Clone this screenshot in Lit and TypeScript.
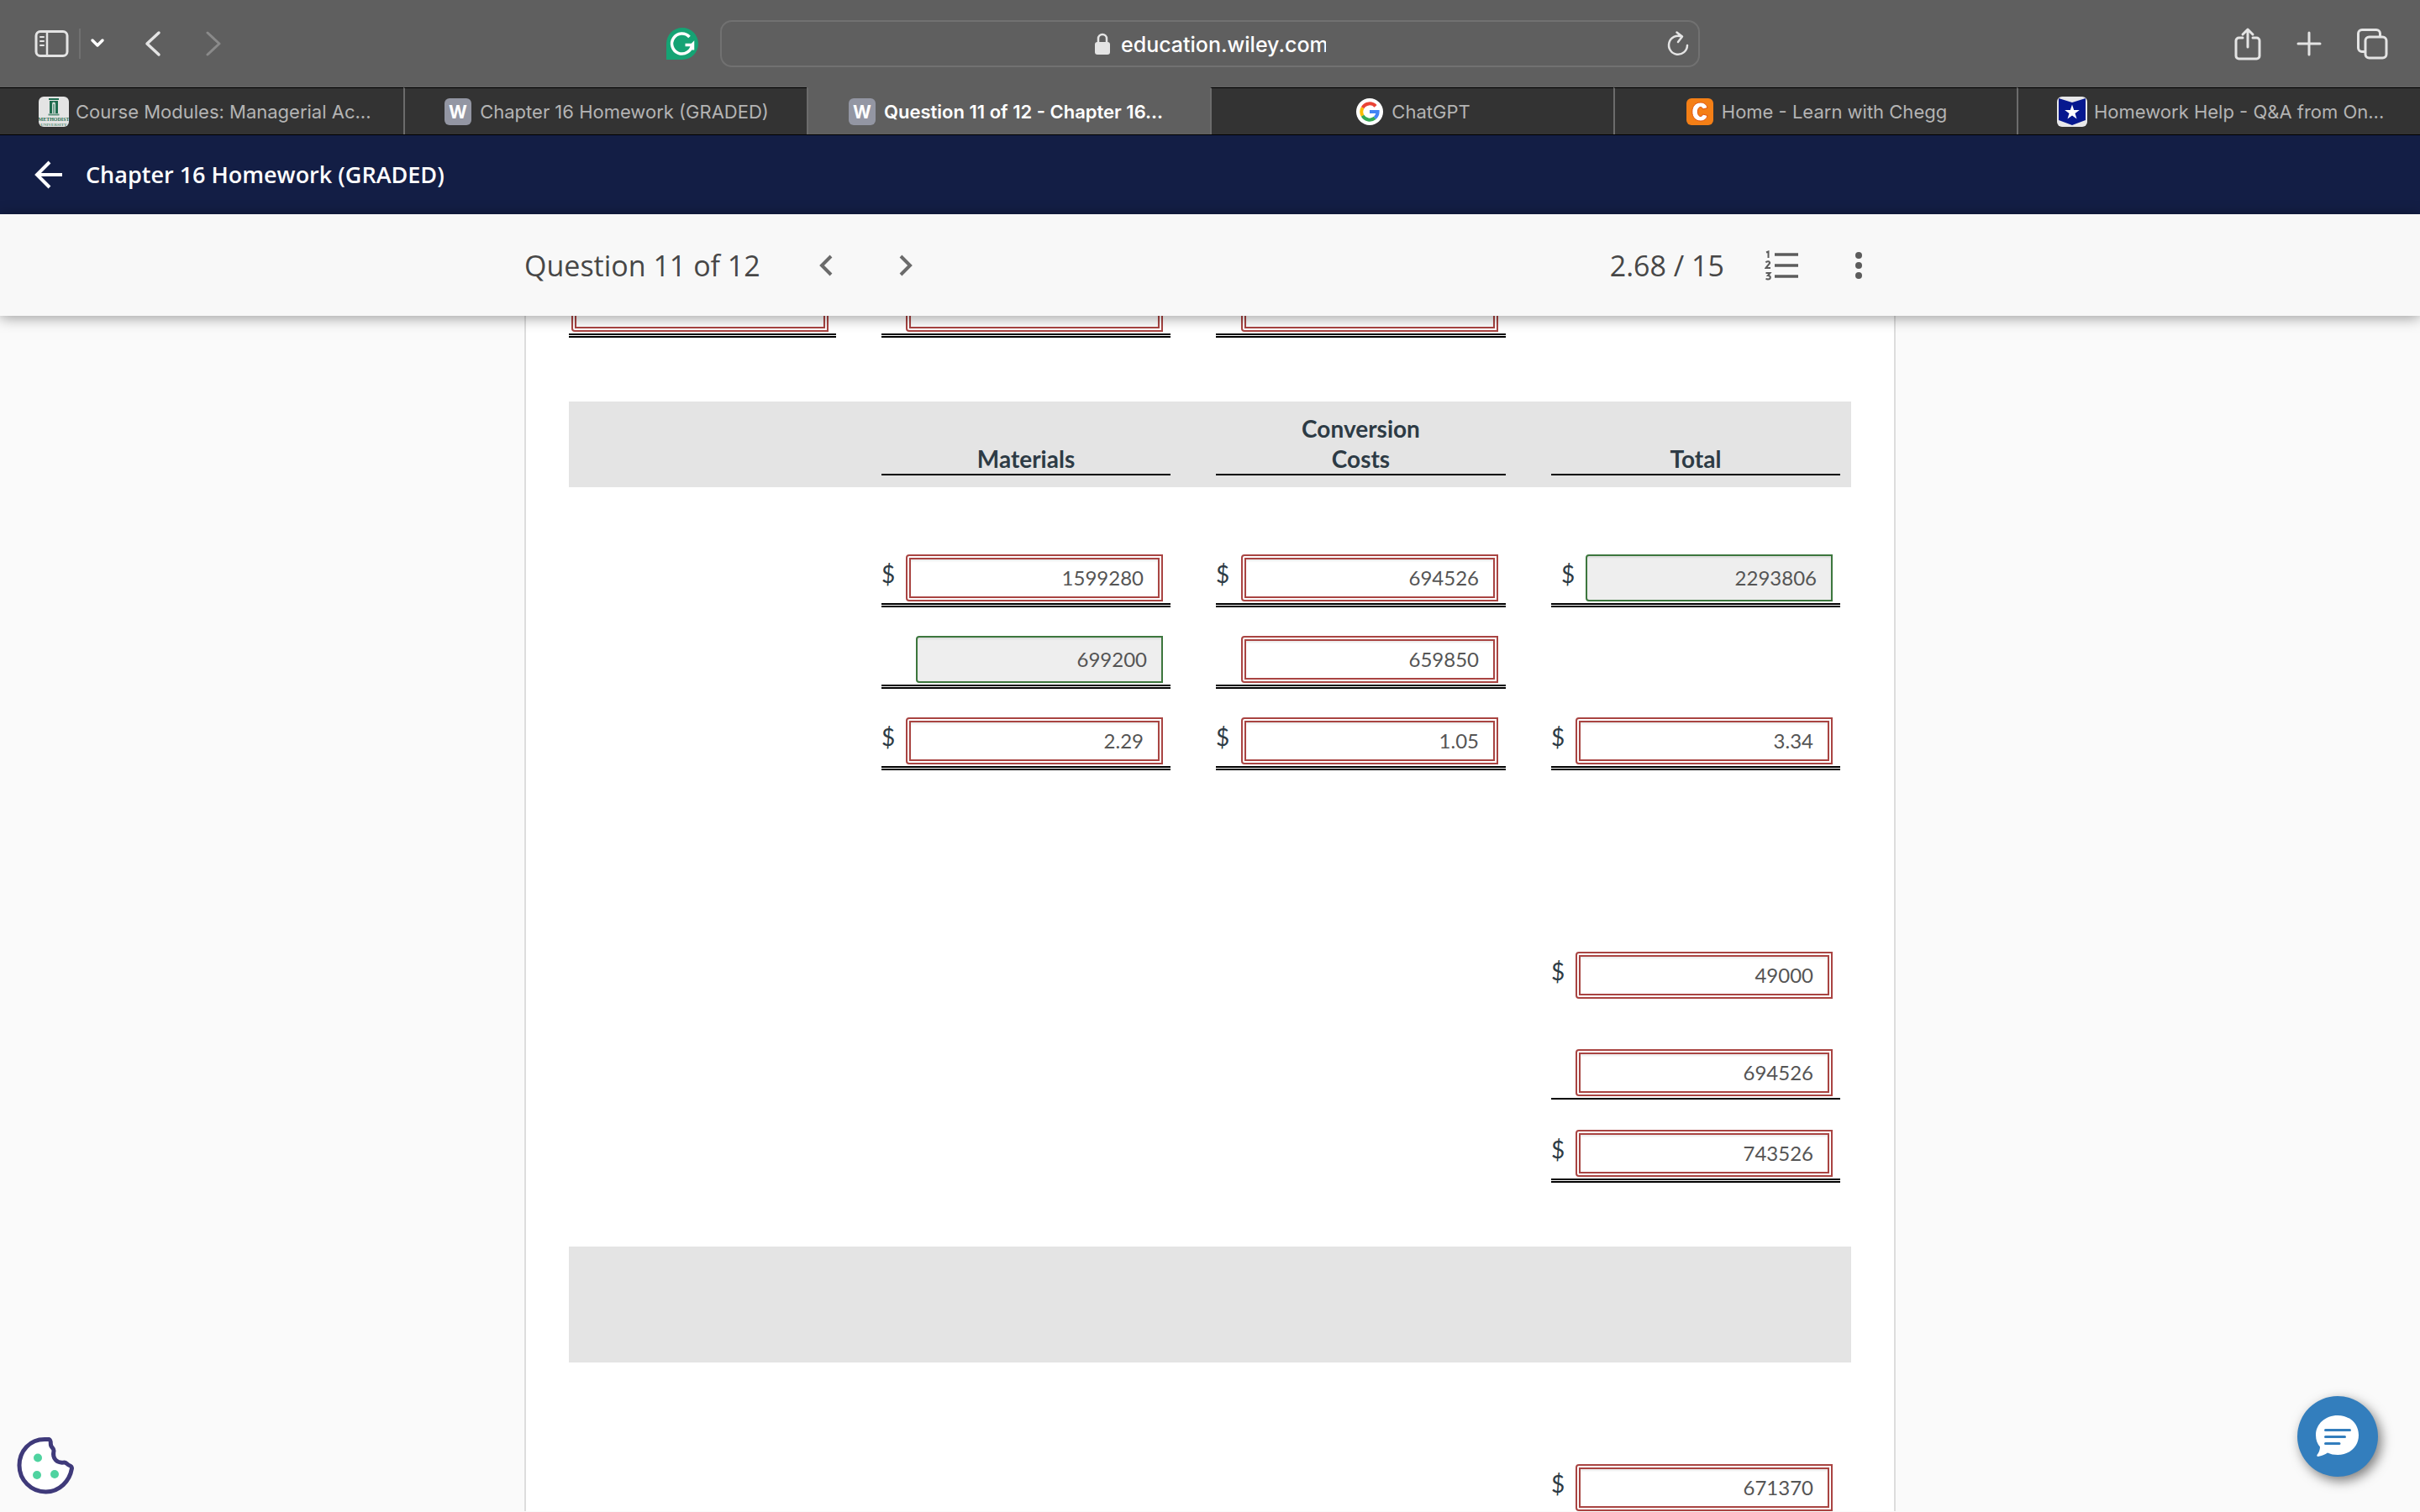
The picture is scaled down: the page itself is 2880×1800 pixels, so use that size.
import { LitElement, html, svg, css, nothing } from "lit";
import { customElement, property } from "lit/decorators.js";
import { classMap } from "lit/directives/class-map.js";

type Rule = "none" | "single" | "double";

interface Answer {
  label: string;
  value: string;
  dollar?: boolean;
  correct?: boolean;
  rule: Rule;
}

interface Tab {
  icon: string;
  title: string;
  truncated?: boolean;
  active?: boolean;
}

const TABS: Tab[] = [
  { icon: "methodist", title: "Course Modules: Managerial Ac...", truncated: true },
  { icon: "w", title: "Chapter 16 Homework (GRADED)" },
  { icon: "w", title: "Question 11 of 12 - Chapter 16...", truncated: true, active: true },
  { icon: "google", title: "ChatGPT" },
  { icon: "chegg", title: "Home - Learn with Chegg" },
  { icon: "star", title: "Homework Help - Q&A from On...", truncated: true },
];

@customElement("tab-icon")
class TabIcon extends LitElement {
  @property() name = "w";

  static styles = css`
    :host { display: block; width: 36px; height: 36px; flex: none; }
    svg { display: block; width: 36px; height: 36px; }
    text { font-family: Inter, sans-serif; font-weight: 700; text-anchor: middle; }
    .serif { font-family: "Liberation Serif", serif; }
  `;

  private shape() {
    switch (this.name) {
      case "methodist":
        return svg`
          <rect width="36" height="36" rx="6" fill="#e4e4e4" />
          <path d="M12 2h12v2H12zM13 5h10v15H13z" fill="#1f6b4e" />
          <path d="M16 20V8.500a2 2 0 0 1 4 0V20z" fill="#cfdcd6" />
          <path d="M17.500 20V9h1v11z" fill="#1f6b4e" />
          <path d="M11.500 20.500h13v2h-13z" fill="#5c917c" />
          <text class="serif" x="18" y="29" font-size="6" fill="#1f6b4e">METHODIST</text>
          <text class="serif" x="18" y="34.500" font-size="5" fill="#5c917c">UNIVERSITY</text>`;
      case "google":
        return svg`
          <circle cx="18" cy="18" r="16" fill="#fff" />
          <g fill="none" stroke-width="4">
            <path d="M25.100 11.400A9.700 9.700 0 0 0 9.600 13.200" stroke="#ea4335" />
            <path d="M9.600 13.200a9.700 9.700 0 0 0 0 9.600" stroke="#fbbc05" />
            <path d="M9.600 22.800a9.700 9.700 0 0 0 14.600 2.600" stroke="#34a853" />
            <path d="M24.200 25.400A9.700 9.700 0 0 0 27.600 18H18" stroke="#4285f4" />
          </g>`;
      case "chegg":
        return svg`
          <rect x="2" y="2" width="32" height="32" rx="6" fill="#f47f16" />
          <path d="M27 13.500C26 9 22.800 7 18.800 7c-6 0-10 4.400-10 11s4 11 10 11c4 0 7.200-2 8.200-6.500l-5.500-1.500c-.500 1.700-1.200 2.500-2.500 2.500-2.300 0-3.600-2-3.600-5.500s1.300-5.500 3.600-5.500c1.300 0 2 .800 2.500 2.500z" fill="#fff" stroke="#e2530c" stroke-width="1" />`;
      case "star":
        return svg`
          <rect width="36" height="36" rx="6" fill="#e8e8ea" />
          <path d="M2 2l16 5 16-5v26l-16 6-16-6z" fill="#06188f" />
          <path d="M18 9.500l2.200 6.400h6.600l-5.300 4 2 6.600-5.500-4-5.500 4 2-6.600-5.300-4h6.600z" fill="#fff" />`;
      default:
        return svg`
          <rect x="2" y="2" width="32" height="32" rx="6" fill="#9396a3" />
          <text x="18" y="26" font-size="21" fill="#fff">W</text>`;
    }
  }

  render() {
    return html`<svg viewBox="0 0 36 36" aria-hidden="true">${this.shape()}</svg>`;
  }
}

@customElement("browser-chrome")
class BrowserChrome extends LitElement {
  static styles = css`
    :host { display: block; background: #5f5f5f; color: #fff; font-family: Inter, "Liberation Sans", sans-serif; }
    button { display: flex; background: none; border: 0; padding: 0; margin: 0; color: inherit; }
    svg { display: block; fill: none; stroke: #e4e4e4; stroke-linecap: round; stroke-linejoin: round; }
    .toolbar { display: grid; grid-template-columns: 1fr minmax(0, 1166px) 1fr; align-items: center; height: 104px; }
    .left { display: flex; align-items: center; padding: 0 26px 0 40px; }
    .divider { width: 2px; height: 36px; margin-left: 12px; background: #717171; }
    .menu { margin-left: 10px; }
    .back { margin-left: 44px; }
    .forward { margin-left: 48px; }
    .grammarly { margin-left: auto; }
    .address { box-sizing: border-box; display: grid; grid-template-columns: 1fr auto 1fr; align-items: center; height: 56px; border: 2px solid #717171; border-radius: 14px; }
    .site { grid-column: 2; display: flex; align-items: center; gap: 12px; }
    .url { width: 244px; padding: 2px 0 0; border: 0; background: none; color: #fff; font: 500 25px/32px Inter, "Liberation Sans", sans-serif; outline: none; }
    .reload { justify-self: end; margin-right: 10px; }
    .right { display: flex; align-items: center; justify-content: flex-end; gap: 40px; padding-right: 38px; }
    .tabs { display: grid; grid-template-columns: repeat(6, 1fr); height: 57px; border-bottom: 1px solid #000; box-sizing: border-box; }
    .tab { display: flex; align-items: center; justify-content: center; gap: 8px; min-width: 0; padding: 0 46px; box-sizing: border-box; background: #333; border-top: 1px solid #000; color: #b4b4b4; text-decoration: none; font-size: 22px; line-height: 32px; white-space: nowrap; }
    .tab + .tab { border-left: 2px solid #6c6c6c; }
    .tab.active { background: #5f5f5f; border-top-color: #5f5f5f; color: #fff; font-weight: 600; }
    .truncated .title { flex: 1; min-width: 0; }
  `;

  render() {
    return html`
      <div class="toolbar">
        <div class="left">
          <button aria-label="Show sidebar">
            <svg width="42" height="34" viewBox="0 0 42 34" stroke-width="3">
              <rect x="3" y="2.500" width="37" height="29" rx="5" />
              <path d="M16 3v28" stroke-width="2.500" />
              <path d="M8 9h4M8 14h4M8 19h4" stroke-width="2" />
            </svg>
          </button>
          <span class="divider"></span>
          <button class="menu" aria-label="Tab groups">
            <svg width="20" height="14" viewBox="0 0 20 14" stroke-width="3.500" style="stroke: #fff"><path d="M4 3l6 6 6-6" /></svg>
          </button>
          <button class="back" aria-label="Back">
            <svg width="24" height="34" viewBox="0 0 24 34" stroke-width="3.500"><path d="M19 4L5 17l14 13" /></svg>
          </button>
          <button class="forward" aria-label="Forward" disabled>
            <svg width="24" height="34" viewBox="0 0 24 34" stroke-width="3" style="stroke: #8a8a8a"><path d="M5 4l14 13L5 30" /></svg>
          </button>
          <button class="grammarly" aria-label="Grammarly">
            <svg width="38" height="38" viewBox="0 0 38 38">
              <path d="M0 19a19 19 0 1 1 19 19H0z" fill="#15a374" stroke="none" />
              <path d="M27.500 11a12 12 0 1 0 3 9.500H22.500M30.500 20.500l1-1v7" stroke="#fff" stroke-width="3.500" stroke-linecap="butt" stroke-linejoin="miter" />
            </svg>
          </button>
        </div>
        <div class="address">
          <div class="site">
            <label for="url" aria-label="Address">
              <svg width="20" height="28" viewBox="0 0 20 28">
                <path d="M5 13V8a5 5 0 0 1 10 0v5" stroke-width="2.500" />
                <rect x="1" y="12" width="18" height="15" rx="3" fill="#e4e4e4" stroke="none" />
              </svg>
            </label>
            <input class="url" id="url" type="text" value="education.wiley.com" />
          </div>
          <button class="reload" aria-label="Reload">
            <svg width="28" height="32" viewBox="0 0 28 32" stroke-width="2.500"><path d="M18 7.500a11 11 0 1 0 7 10.500M12.500 2.500l6.500 5-5 6.500" /></svg>
          </button>
        </div>
        <div class="right">
          <button aria-label="Share">
            <svg width="34" height="40" viewBox="0 0 34 40" stroke-width="3"><path d="M11 13H6.500A3.500 3.500 0 0 0 3 16.500v18A3.500 3.500 0 0 0 6.500 38h21a3.500 3.500 0 0 0 3.500-3.500v-18a3.500 3.500 0 0 0-3.500-3.500H23M17 24V3M11 9l6-6 6 6" /></svg>
          </button>
          <button aria-label="New tab">
            <svg width="32" height="32" viewBox="0 0 32 32" stroke-width="3"><path d="M16 3v26M3 16h26" /></svg>
          </button>
          <button aria-label="Tab overview">
            <svg width="38" height="38" viewBox="0 0 38 38" stroke-width="3">
              <rect x="11" y="11" width="25" height="25" rx="4.500" />
              <path d="M10.500 28.500H7A4.500 4.500 0 0 1 2.500 24V7A4.500 4.500 0 0 1 7 2.500h17A4.500 4.500 0 0 1 28.500 7v3.500" />
            </svg>
          </button>
        </div>
      </div>
      <nav class="tabs" aria-label="Tabs">
        ${TABS.map(
          (t) => html`<a href="#" class=${classMap({ tab: true, active: !!t.active, truncated: !!t.truncated })}>
            <tab-icon name=${t.icon}></tab-icon><span class="title">${t.title}</span>
          </a>`,
        )}
      </nav>
    `;
  }
}

@customElement("answer-field")
class AnswerField extends LitElement {
  @property({ attribute: false }) answer!: Answer;

  static styles = css`
    :host { display: block; }
    .field { display: flex; padding: 0 9px 2px 0; color: #2d3b45; }
    .single { border-bottom: 2px solid #000; }
    .double { border-bottom: 5px double #000; }
    .none { padding-bottom: 0; }
    .sign { flex: 1; font-size: 28px; line-height: 46px; }
    .correct .sign { padding-left: 12px; }
    input { box-sizing: border-box; width: 306px; height: 56px; padding: 0 17px 2px; margin: 0; border: 6px double #a94442; border-radius: 4px 0 0 4px; background: #fff; box-shadow: inset 0 2px 2px rgba(0, 0, 0, 0.08); color: #555; font: 24px/34px Lato, sans-serif; text-align: right; outline: none; }
    .correct input { width: 294px; border: 2px solid #3c763d; background: #eee; }
  `;

  render() {
    const a = this.answer;
    return html`<div class=${classMap({ field: true, [a.rule]: true, correct: !!a.correct })}>
      <label class="sign" for="value">${a.dollar ? "$" : nothing}</label>
      <input id="value" type="text" aria-label=${a.label} .value=${a.value} ?readonly=${a.correct} />
    </div>`;
  }
}

const field = (label: string, value: string, rule: Rule, dollar = true, correct = false): Answer => ({
  label,
  value,
  rule,
  dollar,
  correct,
});

interface Row {
  kind: string;
  cells: (Answer | null)[];
}

const BEFORE: Row[] = [
  {
    kind: "first",
    cells: [field("Units", "", "double", false), field("Materials units", "", "double", false), field("Conversion units", "", "double", false), null],
  },
];

const AFTER: Row[] = [
  { kind: "costs", cells: [null, field("Materials total", "1599280", "double"), field("Conversion total", "694526", "double"), field("Total costs", "2293806", "double", true, true)] },
  { kind: "units", cells: [null, field("Materials equivalent units", "699200", "double", false, true), field("Conversion equivalent units", "659850", "double", false), null] },
  { kind: "units", cells: [null, field("Materials unit cost", "2.29", "double"), field("Conversion unit cost", "1.05", "double"), field("Total unit cost", "3.34", "double")] },
  { kind: "opening", cells: [null, null, null, field("Costs in beginning inventory", "49000", "none")] },
  { kind: "started", cells: [null, null, null, field("Costs started into production", "694526", "single", false)] },
  { kind: "sum", cells: [null, null, null, field("Total costs to account for", "743526", "double")] },
];

@customElement("app-root")
class AppRoot extends LitElement {
  static styles = css`
    :host { display: flex; flex-direction: column; height: 100vh; overflow: hidden; position: relative; background: #fafafa; color: #2d3b45; font-family: Lato, sans-serif; }
    button { display: flex; background: none; border: 0; padding: 0; margin: 0; }
    svg { display: block; }
    .course { display: flex; align-items: center; gap: 24px; flex: none; height: 94px; padding: 0 36px; background: #131e45; color: #fff; font: 600 27px/40px "Open Sans", sans-serif; }
    .course h1 { margin: 0; font: inherit; }
    .bar { flex: none; position: relative; z-index: 1; height: 121px; background: #f8f8f8; box-shadow: 0 2px 16px rgba(0, 0, 0, 0.4); }
    .inner { display: flex; align-items: center; max-width: 1632px; height: 100%; margin: 0 auto; color: #474747; font: 34px/48px "Open Sans", sans-serif; }
    .inner h2 { margin: 0; font: inherit; }
    .prev { margin-left: 64px; }
    .next { margin-left: 67px; }
    .score { margin-left: auto; }
    .list { margin-left: 48px; }
    .more { margin: 0 34px 0 60px; }
    main { flex: 1; min-height: 0; overflow: hidden; }
    .card { box-sizing: border-box; max-width: 1632px; min-height: 100%; margin: 0 auto; padding: 0 51px; border: solid #ddd; border-width: 0 2px; background: #fff; }
    table { width: 100%; margin-top: -37px; border-collapse: collapse; table-layout: fixed; }
    .c1 { width: 372px; }
    .c2 { width: 398px; }
    .c3 { width: 399px; }
    td, th { padding: 0 54px 0 0; vertical-align: bottom; }
    td:last-child, th:last-child { padding-right: 13px; }
    .gap { height: 76px; }
    .head { height: 102px; background: #e4e4e4; }
    .head th { padding-bottom: 14px; font-size: 28px; line-height: 36px; font-weight: 700; }
    .caption { border-bottom: 2px solid #000; }
    .first { height: 63px; }
    .costs { height: 143px; }
    .units { height: 97px; }
    .opening { height: 272px; }
    .started { height: 120px; }
    .sum { height: 99px; }
    .band { height: 138px; background: #e4e4e4; }
    .last { height: 177px; }
    .cookie { position: absolute; left: 20px; bottom: 20px; }
    .chat { position: absolute; right: 50px; bottom: 42px; width: 96px; height: 96px; border-radius: 50%; background: #337ebd; align-items: center; justify-content: center; box-shadow: 4px 5px 14px rgba(0, 0, 0, 0.5); }
  `;

  private row(r: Row) {
    return html`<tr class=${r.kind}>
      ${r.cells.map((c) => html`<td>${c ? html`<answer-field .answer=${c}></answer-field>` : nothing}</td>`)}
    </tr>`;
  }

  render() {
    return html`
      <browser-chrome></browser-chrome>
      <header class="course">
        <button aria-label="Back to course">
          <svg width="42" height="40" viewBox="0 0 42 40" fill="none" stroke="#fff" stroke-width="4"><path d="M38 20H9M23 5L8 20l15 15" /></svg>
        </button>
        <h1>Chapter 16 Homework (GRADED)</h1>
      </header>
      <section class="bar">
        <div class="inner">
          <h2>Question 11 of 12</h2>
          <button class="prev" aria-label="Previous question">
            <svg width="28" height="32" viewBox="0 0 28 32" fill="none" stroke="#6b6b6b" stroke-width="4"><path d="M20 5L9 16l11 11" /></svg>
          </button>
          <button class="next" aria-label="Next question">
            <svg width="28" height="32" viewBox="0 0 28 32" fill="none" stroke="#6b6b6b" stroke-width="4"><path d="M8 5l11 11L8 27" /></svg>
          </button>
          <span class="score">2.68 / 15</span>
          <button class="list" aria-label="Question list">
            <svg width="42" height="36" viewBox="0 0 42 36" fill="none" stroke="#5c5c5c">
              <path d="M12 5h28M12 18h28M12 31h28" stroke-width="3.500" />
              <path d="M2 2.500l2.500-1V9M1.500 14.500c1-2 5.500-1.500 4.500 1L1.500 21H7M1.500 27h5L4 30c4 0 3.500 4.500 0 4.500L1.500 34" stroke-width="2" />
            </svg>
          </button>
          <button class="more" aria-label="More options">
            <svg width="20" height="36" viewBox="0 0 20 36" fill="#5c5c5c"><circle cx="10" cy="6" r="4" /><circle cx="10" cy="18" r="4" /><circle cx="10" cy="30" r="4" /></svg>
          </button>
        </div>
      </section>
      <main>
        <div class="card">
          <table>
            <colgroup><col class="c1" /><col class="c2" /><col class="c3" /><col /></colgroup>
            <tbody>
              ${BEFORE.map((r) => this.row(r))}
              <tr class="gap"><td colspan="4"></td></tr>
              <tr class="head">
                <td></td>
                <th scope="col"><div class="caption">Materials</div></th>
                <th scope="col"><div class="caption">Conversion<br />Costs</div></th>
                <th scope="col"><div class="caption">Total</div></th>
              </tr>
              ${AFTER.map((r) => this.row(r))}
              <tr class="gap"><td colspan="4"></td></tr>
              <tr class="band"><td colspan="4"></td></tr>
              ${this.row({ kind: "last", cells: [null, null, null, field("Costs transferred out", "671370", "none")] })}
            </tbody>
          </table>
        </div>
      </main>
      <button class="cookie" aria-label="Cookie preferences">
        <svg width="70" height="70" viewBox="0 0 70 70">
          <path d="M35 3.500C15 2.500 3 18 3 34.500 3 52 17 66 34.500 66 51 66 63 53 65.500 38c0-2-1.500-3-3-3.500-3-1-3.500-4-6.500-3.500-8 1-14-4-12-14 0-3-2.500-3-3.500-6.500-.500-2 .500-6-2-7z" fill="#fff" stroke="#3f3a7a" stroke-width="5" stroke-linejoin="round" />
          <circle cx="25" cy="25.500" r="5" fill="#4fd3a0" /><circle cx="24" cy="46" r="5" fill="#4fd3a0" /><circle cx="45" cy="45" r="5" fill="#4fd3a0" />
        </svg>
      </button>
      <button class="chat" aria-label="Open chat">
        <svg width="52" height="50" viewBox="0 0 52 50">
          <path d="M26 0C11.500 0 0 10 0 23.500 0 29.500 2 34 5 37.500 5 41 3.500 44.500 1.500 47c-.500 1 0 2 1 2C7 48.500 11 46.500 14 44.500c3.500 1.700 7.500 2.500 12 2.500 14.500 0 25-10 25-23.500S40.500 0 26 0z" fill="#fff" />
          <path d="M11.500 17.500h29M11.500 25.500h23M11.500 33.500h16.500" stroke="#337ebd" stroke-width="3" stroke-linecap="round" />
        </svg>
      </button>
    `;
  }
}
